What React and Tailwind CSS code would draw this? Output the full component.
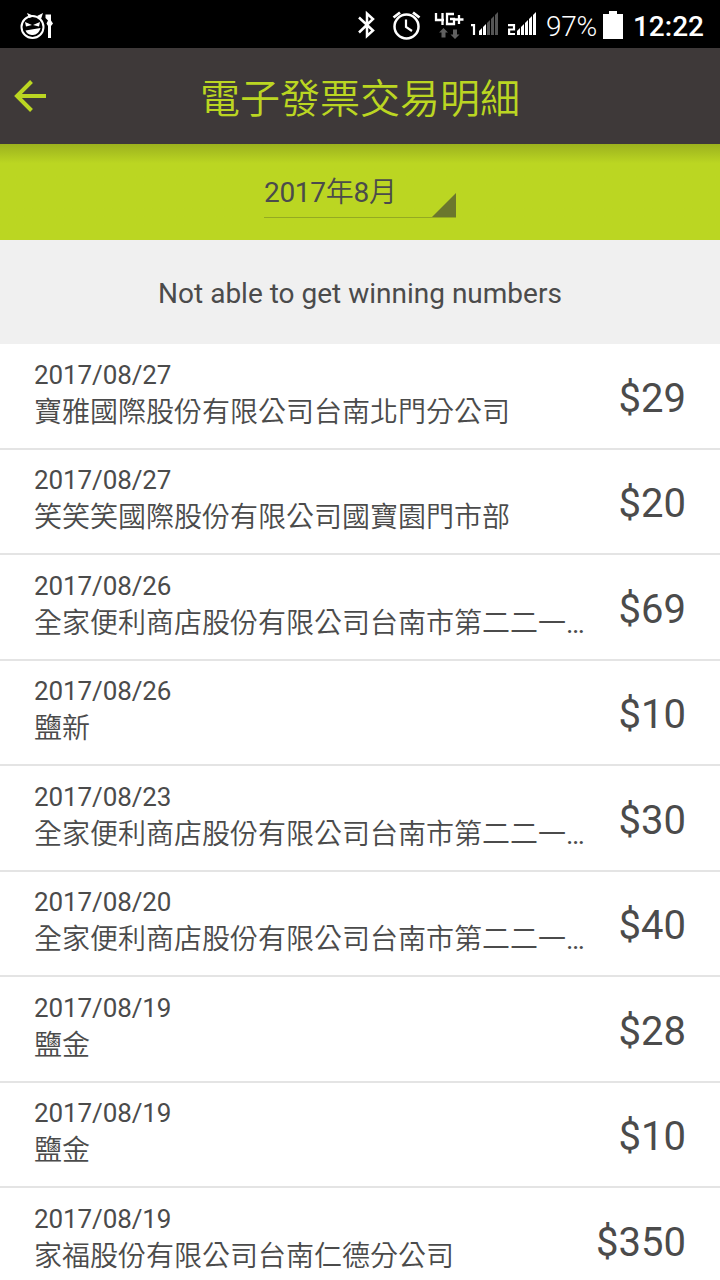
import React from 'react';

const transactions = [
  { date: '2017/08/27', store: '寶雅國際股份有限公司台南北門分公司', amount: '$29' },
  { date: '2017/08/27', store: '笑笑笑國際股份有限公司國寶園門市部', amount: '$20' },
  { date: '2017/08/26', store: '全家便利商店股份有限公司台南市第二二一', cut: true, amount: '$69' },
  { date: '2017/08/26', store: '鹽新', amount: '$10' },
  { date: '2017/08/23', store: '全家便利商店股份有限公司台南市第二二一', cut: true, amount: '$30' },
  { date: '2017/08/20', store: '全家便利商店股份有限公司台南市第二二一', cut: true, amount: '$40' },
  { date: '2017/08/19', store: '鹽金', amount: '$28' },
  { date: '2017/08/19', store: '鹽金', amount: '$10' },
  { date: '2017/08/19', store: '家福股份有限公司台南仁德分公司', amount: '$350' },
];

function FaceIcon() {
  return (
    <svg className="w-9 h-8 ml-[19px]" viewBox="0 0 36 32" fill="none" stroke="#fff">
      <circle cx="13.500" cy="19" r="11" strokeWidth="2" />
      <path d="M8 5l7 3-5 2zM24 5l-6 3 4 3z" fill="#fff" stroke="none" />
      <path d="M6 14l7 3-6 1.500zM21 14l-7 3 6 1.500z" fill="#fff" stroke="none" />
      <path d="M6.500 22.500l15-2.500c-1 4-4 7-7.500 7s-6-1-7.500-4.500z" fill="#fff" stroke="none" />
      <path d="M26.500 6.500h5.500v6l2 3-2 2.500V30h-3V18l-1.500-2.500 1.500-3-2.500-2.500z" fill="#fff" stroke="none" />
    </svg>
  );
}

function BluetoothIcon() {
  return (
    <svg className="w-5 h-8" viewBox="0 0 20 32" fill="none" stroke="#fff" strokeWidth="2.500">
      <path d="M2 9.500 16 22.500 10 28V5.500L16 11 2 24.500" />
    </svg>
  );
}

function AlarmIcon() {
  return (
    <svg className="w-8 h-8 ml-[13px]" viewBox="0 0 32 32" fill="none" stroke="#fff" strokeWidth="2.500">
      <circle cx="16.500" cy="18.500" r="12" />
      <path d="M3.500 9.500 10 4.500M23 4.500l6.500 5" strokeWidth="2.800" />
      <path d="M16 11.500v7.500l6 4" strokeWidth="2.200" />
    </svg>
  );
}

function NetworkIcon() {
  return (
    <svg className="w-8 h-8 ml-[11px]" viewBox="0 0 32 32">
      <path d="M3 5v7h8M9.500 5v12M21 6h-7v10h7v-5h-4M21.500 11.500h9M26 7v9" fill="none" stroke="#fff" strokeWidth="2.300" />
      <path d="M10.500 20l4.500 4.500h-2.500v5h-4v-5H6zM22 31l-4.500-4.500h2.500v-5h4v5h2.500z" fill="#606060" />
    </svg>
  );
}

function SignalIcon({ sim, bars }) {
  return (
    <svg className="w-[30px] h-8" viewBox="0 0 30 32">
      {sim === 1 ? (
        <path d="M1 17.100h3V27" fill="none" stroke="#fff" strokeWidth="2.200" />
      ) : (
        <path d="M0 17.100h6v4.400H1.100V26H7" fill="none" stroke="#fff" strokeWidth="2.200" />
      )}
      {[0, 1, 2, 3, 4].map((i) => (
        <path
          key={i}
          d={`M${9 + i * 4} 27v${-4 - i * 4}l3-3V27z`}
          fill={i < bars ? '#fff' : '#555'}
        />
      ))}
    </svg>
  );
}

function StatusBar() {
  return (
    <div className="flex items-center h-12 shrink-0 bg-black text-white">
      <FaceIcon />
      <div className="flex items-center ml-auto pr-4">
        <BluetoothIcon />
        <AlarmIcon />
        <NetworkIcon />
        <div className="flex ml-[5px] gap-[8px]">
          <SignalIcon sim={1} bars={2} />
          <SignalIcon sim={2} bars={5} />
        </div>
        <span className="ml-2 text-[28px] leading-8 pt-1.5 w-[51px] whitespace-nowrap font-[350] tracking-[-0.3px]">97%</span>
        <svg className="w-5 h-8 ml-[6px]" viewBox="0 0 20 32">
          <path d="M6 3h8v3h6v25H0V6h6z" fill="#fff" />
        </svg>
        <span className="ml-[10px] text-[28px] leading-8 pt-1.5 font-medium whitespace-nowrap">12:22</span>
      </div>
    </div>
  );
}

function Header() {
  return (
    <header className="grid grid-cols-[60px_1fr_60px] items-center h-24 shrink-0 bg-[#3e3939] text-[#bbd622]">
      <svg className="w-8 h-8 ml-3.5" viewBox="0 0 32 32" fill="none" stroke="currentColor" strokeWidth="4">
        <path d="M32 16H3M17.500 1.500 3 16l14.500 14.500" />
      </svg>
      <h1 className="pt-2 text-center text-[40px] leading-none font-[350]">電子發票交易明細</h1>
    </header>
  );
}

function MonthPicker() {
  return (
    <div className="flex justify-center h-24 shrink-0 bg-[#bbd622] bg-linear-to-b from-[#9cb21e] to-[#bbd622] to-20%">
      <div className="flex justify-between items-end w-48 h-[74px] border-b border-[#94aa22]">
        <span className="text-[28px] leading-[48px] tracking-[-0.3px]">
          2017<span className="font-[350]">年</span>8<span className="font-[350]">月</span>
        </span>
        <svg className="w-6 h-6" viewBox="0 0 24 24">
          <path d="M24 0v24H0z" fill="#6b772d" />
        </svg>
      </div>
    </div>
  );
}

function TransactionRow({ date, store, cut, amount }) {
  return (
    <li className="flex items-center justify-between h-[105.500px] shrink-0 px-[34px] border-b-2 border-[#e4e4e4]">
      <div className="pb-0.5">
        <div className="text-[26px] leading-[35px] tracking-[-0.1px]">{date}</div>
        <div className="text-[28px] leading-[39px] font-[350] whitespace-nowrap">
          {store}
          {cut && <span className="font-normal">…</span>}
        </div>
      </div>
      <div className="pt-1.5 text-[40px] leading-none">{amount}</div>
    </li>
  );
}

export default function App() {
  return (
    <div className="flex flex-col w-full h-[1280px] overflow-hidden bg-white text-[#4b4b4b] font-[Roboto,'Noto_Sans_CJK_TC',sans-serif]">
      <StatusBar />
      <Header />
      <MonthPicker />
      <div className="flex items-center justify-center h-[104px] shrink-0 pt-1 bg-[#f0f0f0] text-[28px]">
        Not able to get winning numbers
      </div>
      <ul className="flex flex-col">
        {transactions.map((item, i) => (
          <TransactionRow key={i} {...item} />
        ))}
      </ul>
    </div>
  );
}
